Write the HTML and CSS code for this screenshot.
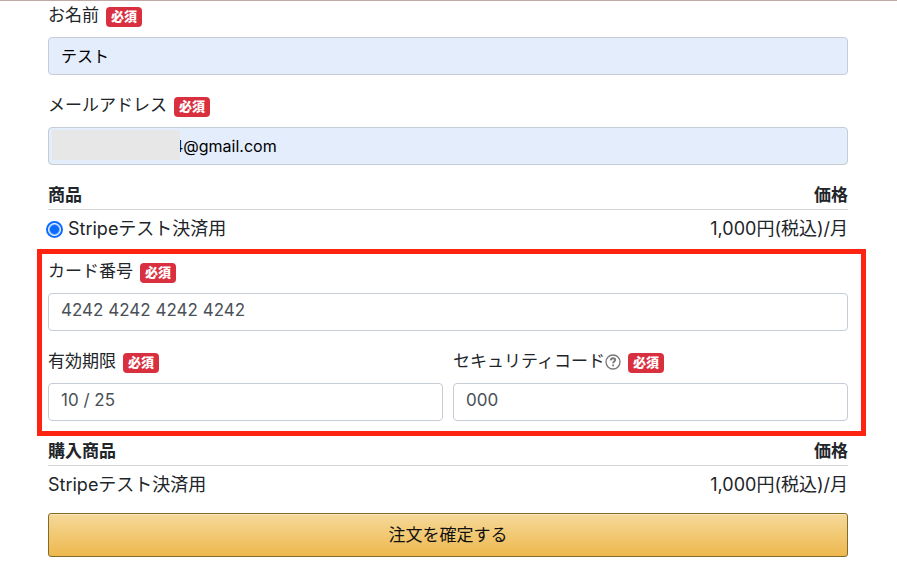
FILE: index.html
```
<!DOCTYPE html>
<html lang="ja">
<head>
  <meta charset="UTF-8" />
  <meta name="viewport" content="width=device-width, initial-scale=1.0" />
  <title>注文</title>
  <link rel="stylesheet" href="styles.css">
</head>
<body>
  <form class="order-form">
    <div class="form-group">
      <div class="label-row">
        <label for="name">お名前</label>
        <span class="badge">必須</span>
      </div>
      <input class="form-control autofill" type="text" id="name" value="テスト">
    </div>

    <div class="form-group">
      <div class="label-row">
        <label for="email">メールアドレス</label>
        <span class="badge">必須</span>
      </div>
      <div class="email-box">
        <input class="form-control autofill masked" type="text" id="email" value="4@gmail.com">
        <span class="mask"></span>
      </div>
    </div>

    <table class="items">
      <thead>
        <tr><th>商品</th><th class="price">価格</th></tr>
      </thead>
      <tbody>
        <tr>
          <td>
            <div class="choice">
              <input type="radio" id="plan" name="plan" checked>
              <label for="plan">Stripeテスト決済用</label>
            </div>
          </td>
          <td class="price">1,000円(税込)/月</td>
        </tr>
      </tbody>
    </table>

    <!-- カード情報 -->
    <div class="card-info">
      <div class="form-group">
        <div class="label-row">
          <label for="card">カード番号</label>
          <span class="badge">必須</span>
        </div>
        <input class="form-control card-input" type="text" id="card" value="4242 4242 4242 4242">
      </div>
      <div class="form-row">
        <div class="col">
          <div class="label-row">
            <label for="expiry">有効期限</label>
            <span class="badge">必須</span>
          </div>
          <input class="form-control card-input" type="text" id="expiry" value="10 / 25">
        </div>
        <div class="col">
          <div class="label-row">
            <label for="cvc">セキュリティコード</label>
            <svg class="help" viewBox="0 0 16 16" aria-hidden="true">
              <circle cx="8" cy="8" r="7" />
              <path class="mark" d="M5.8 6.4C5.9 5 6.8 4.3 8 4.3s2.2.7 2.2 1.8c0 1.4-2.1 1.5-2.1 3.1M8.1 10.5v1.7" />
            </svg>
            <span class="badge">必須</span>
          </div>
          <input class="form-control card-input" type="text" id="cvc" value="000">
        </div>
      </div>
    </div>

    <table class="items">
      <thead>
        <tr><th>購入商品</th><th class="price">価格</th></tr>
      </thead>
      <tbody>
        <tr><td>Stripeテスト決済用</td><td class="price">1,000円(税込)/月</td></tr>
      </tbody>
    </table>

    <button class="btn-order" type="submit">注文を確定する</button>
  </form>
</body>
</html>
```
FILE: styles.css
```
* {
  box-sizing: border-box;
}
body {
  margin: 0;
  border-top: 1px solid #bfa9a7;
  background: #fff;
  color: #212529;
  font-family: Inter, "Noto Sans CJK JP", sans-serif;
  font-size: 17px;
  line-height: 28px;
}
.order-form {
  padding: 0 49px 19px 48px;
}
.form-group {
  margin-bottom: 16px;
}
.label-row {
  display: flex;
  align-items: center;
  height: 28px;
  margin-bottom: 8px;
}
.badge {
  margin: 3px 0 0 7px;
  padding: 0 5px 1px;
  border-radius: 4px;
  background: #d9303f;
  color: #fff;
  font-size: 13px;
  font-weight: 900;
  line-height: 19px;
}
.form-control {
  display: block;
  width: 100%;
  height: 38px;
  padding: 0 12px;
  border: 1px solid #c5ccd3;
  border-radius: 4px;
  background: #fff;
  color: #495057;
  font-family: inherit;
  font-size: 16px;
}
.autofill {
  padding-bottom: 2px;
  background: #e4edfc;
  color: #000;
}
.card-input {
  padding-bottom: 4px;
  font-size: 17px;
}
.email-box {
  position: relative;
}
.masked {
  padding-bottom: 0;
  padding-left: 124px;
}
.mask {
  position: absolute;
  top: 3px;
  left: 4px;
  width: 128px;
  height: 30px;
  background: #e7e7e7;
}
.items {
  width: 100%;
  margin-bottom: 14px;
  border-collapse: collapse;
}
.items th {
  padding: 0;
  border-bottom: 1px solid #d3d5d7;
  text-align: left;
}
.items td {
  padding: 5px 0 0;
  font-size: 18px;
}
.items .price {
  text-align: right;
}
.choice {
  display: flex;
  align-items: center;
  gap: 5px;
}
.choice input {
  appearance: none;
  width: 17px;
  height: 17px;
  margin: 0 0 0 -2px;
  border: 2px solid #0a6cff;
  border-radius: 50%;
  background: radial-gradient(circle, #0a6cff 4px, #fff 6px);
}
.card-info {
  position: relative;
  margin-bottom: 16px;
}
/* 赤枠 */
.card-info::after {
  content: "";
  position: absolute;
  top: -8px;
  right: -18px;
  bottom: -15px;
  left: -11px;
  border: 5px solid #ff2412;
  pointer-events: none;
}
.form-row {
  display: flex;
  gap: 10px;
}
.col {
  flex: 1;
}
.help {
  width: 16px;
  height: 16px;
  margin-top: 1px;
  fill: none;
  stroke: #777;
  stroke-width: 1.3;
}
.help .mark {
  stroke-width: 1.9;
}
.btn-order {
  display: block;
  width: 100%;
  height: 44px;
  padding: 0 0 3px;
  border: 1px solid #846a29;
  border-radius: 3px;
  background: linear-gradient(#f6d99a, #edb84d);
  box-shadow: inset 0 1px 0 #fae6bd;
  color: #111;
  font-family: inherit;
  font-size: 17px;
  cursor: pointer;
}
```
